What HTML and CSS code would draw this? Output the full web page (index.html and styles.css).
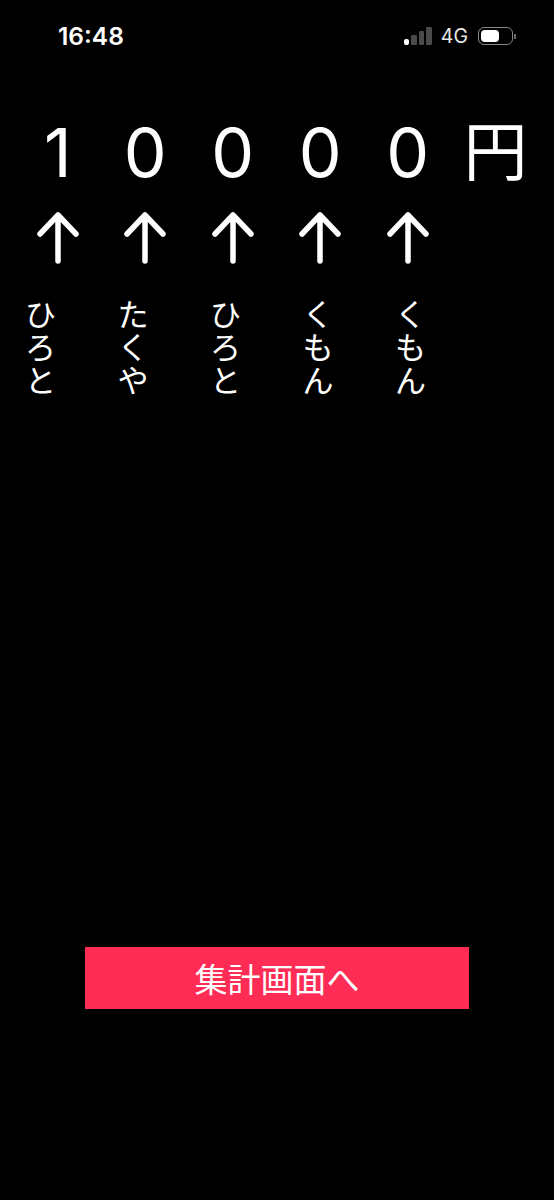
FILE: index.html
```html
<!DOCTYPE html>
<html lang="ja">
<head>
    <meta charset="UTF-8">
    <meta name="viewport" content="width=device-width, initial-scale=1.0">
    <title>集計</title>
    <link rel="stylesheet" href="styles.css">
</head>
<body>
    <div class="status-bar">
        <div class="time">16:48</div>
        <div class="status-icons">
            <div class="signal">
                <span class="bar bar-1"></span>
                <span class="bar bar-2"></span>
                <span class="bar bar-3"></span>
                <span class="bar bar-4"></span>
            </div>
            <div class="network">4G</div>
            <div class="battery"><span class="battery-level"></span></div>
            <span class="battery-cap"></span>
        </div>
    </div>

    <div class="amount">
        <div class="digit">1</div>
        <div class="digit">0</div>
        <div class="digit">0</div>
        <div class="digit">0</div>
        <div class="digit">0</div>
        <div class="yen">円</div>
    </div>

    <div class="arrows">
        <svg class="arrow" viewBox="0 0 44 54"><path d="M22 51V5M4 24L22 5L40 24"/></svg>
        <svg class="arrow" viewBox="0 0 44 54"><path d="M22 51V5M4 24L22 5L40 24"/></svg>
        <svg class="arrow" viewBox="0 0 44 54"><path d="M22 51V5M4 24L22 5L40 24"/></svg>
        <svg class="arrow" viewBox="0 0 44 54"><path d="M22 51V5M4 24L22 5L40 24"/></svg>
        <svg class="arrow" viewBox="0 0 44 54"><path d="M22 51V5M4 24L22 5L40 24"/></svg>
    </div>

    <div class="names">
        <div class="name">ひ<br>ろ<br>と</div>
        <div class="name">た<br>く<br>や</div>
        <div class="name">ひ<br>ろ<br>と</div>
        <div class="name">く<br>も<br>ん</div>
        <div class="name">く<br>も<br>ん</div>
    </div>

    <div class="footer">
        <button class="summary-button">集計画面へ</button>
    </div>
</body>
</html>
```

FILE: styles.css
```css
* {
    box-sizing: border-box;
}

html, body {
    margin: 0;
    padding: 0;
}

body {
    width: 554px;
    height: 1200px;
    overflow: hidden;
    background: #000;
    color: #fff;
    font-family: "Inter", "Noto Sans CJK JP", sans-serif;
}

/* ステータスバー */
.status-bar {
    display: flex;
    justify-content: space-between;
    align-items: center;
    height: 30px;
    margin-top: 21px;
    padding: 0 38px 0 58px;
}

.time {
    font-size: 24.5px;
    font-weight: 600;
    line-height: 30px;
}

.status-icons {
    display: flex;
    align-items: center;
}

.signal {
    display: flex;
    align-items: flex-end;
    gap: 2px;
    height: 18px;
    margin-right: 9px;
}

.bar {
    width: 5.5px;
    border-radius: 1px;
    background: #4a4a4a;
}

.bar-1 { height: 6px; border-radius: 2px; background: #fff; }
.bar-2 { height: 10px; }
.bar-3 { height: 14px; }
.bar-4 { height: 18px; }

.network {
    font-size: 19.5px;
    color: #e8e8e8;
    margin-right: 10px;
}

.battery {
    width: 35px;
    height: 18px;
    padding: 2px;
    border: 1px solid #888;
    border-radius: 6px;
}

.battery-level {
    display: block;
    width: 18px;
    height: 12px;
    border-radius: 4px;
    background: #fff;
}

.battery-cap {
    width: 2px;
    height: 5px;
    margin-left: 1px;
    background: #666;
}

/* 金額 */
.amount {
    display: flex;
    align-items: center;
    height: 90px;
    margin-top: 56px;
    padding-left: 14px;
}

.digit {
    width: 87.5px;
    text-align: center;
    font-size: 68px;
    font-weight: 400;
    line-height: 90px;
}

.yen {
    margin-left: 12px;
    font-size: 64px;
    font-weight: 400;
    line-height: 90px;
}

.arrows {
    display: flex;
    margin-top: 13px;
    padding-left: 14px;
}

.arrow {
    display: block;
    width: 44px;
    height: 54px;
    margin: 0 21.75px;
    fill: none;
    stroke: #fff;
    stroke-width: 5.5;
    stroke-linecap: round;
    stroke-linejoin: round;
}

.names {
    display: flex;
    margin-top: 34px;
    padding-left: 25px;
}

.name {
    width: 92.5px;
    font-size: 31px;
    font-weight: 400;
    line-height: 33px;
}

.footer {
    display: flex;
    justify-content: center;
    margin-top: 550px;
}

.summary-button {
    width: 384px;
    height: 62px;
    border: none;
    background: #ff2d55;
    color: #fff;
    font-family: inherit;
    font-size: 33px;
    font-weight: 400;
}
```
